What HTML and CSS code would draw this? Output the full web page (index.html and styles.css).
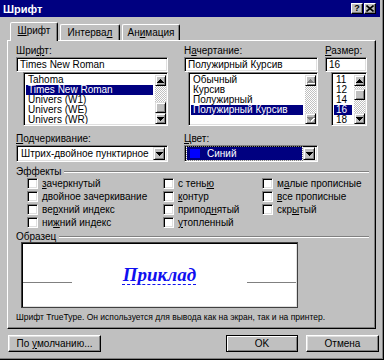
FILE: index.html
```html
<!DOCTYPE html>
<html lang="ru">
<head>
    <meta charset="utf-8">
    <title>Шрифт</title>
    <link rel="stylesheet" href="styles.css">
</head>
<body>
<div class="window">
    <div class="titlebar">
        <span class="title">Шрифт</span>
        <div class="title-buttons">
            <span class="tbtn help">?</span>
            <span class="tbtn"><svg width="8" height="7" viewBox="0 0 8 7"><path d="M0.5 0.5l7 6M7.5 0.5l-7 6" stroke="#000" stroke-width="1.6"/></svg></span>
        </div>
    </div>

    <div class="tabs">
        <div class="tab active"><u>Ш</u>рифт</div>
        <div class="tab">Интерва<u>л</u></div>
        <div class="tab">Ан<u>и</u>мация</div>
    </div>

    <section class="panel">
        <div class="cols">
            <div class="col col-font">
                <label>Шри<u>ф</u>т:</label>
                <div class="field">Times New Roman</div>
                <div class="list list-font">
                    <ul>
                        <li>Tahoma</li>
                        <li class="sel">Times New Roman</li>
                        <li>Univers (W1)</li>
                        <li>Univers (WE)</li>
                        <li>Univers (WR)</li>
                    </ul>
                    <div class="scroll">
                        <span class="sbtn"><svg width="7" height="4" viewBox="0 0 7 4"><path d="M3 0h1v1h1v1h1v1h1v1h-7v-1h1v-1h1v-1h1z"/></svg></span>
                        <span class="track"><i class="thumb thumb-low"></i></span>
                        <span class="sbtn"><svg width="7" height="4" viewBox="0 0 7 4"><path d="M0 0h7v1h-1v1h-1v1h-1v1h-1v-1h-1v-1h-1v-1h-1z"/></svg></span>
                    </div>
                </div>
            </div>

            <div class="col col-style">
                <label>Н<u>а</u>чертание:</label>
                <div class="field">Полужирный Курсив</div>
                <div class="list list-style">
                    <ul>
                        <li>Обычный</li>
                        <li>Курсив</li>
                        <li>Полужирный</li>
                        <li class="sel">Полужирный Курсив</li>
                    </ul>
                    <div class="scroll disabled">
                        <span class="sbtn"><svg width="7" height="4" viewBox="0 0 7 4"><path d="M3 0h1v1h1v1h1v1h1v1h-7v-1h1v-1h1v-1h1z"/></svg></span>
                        <span class="track"></span>
                        <span class="sbtn"><svg width="7" height="4" viewBox="0 0 7 4"><path d="M0 0h7v1h-1v1h-1v1h-1v1h-1v-1h-1v-1h-1v-1h-1z"/></svg></span>
                    </div>
                </div>
            </div>

            <div class="col col-size">
                <label><u>Р</u>азмер:</label>
                <div class="field">16</div>
                <div class="list list-size">
                    <ul>
                        <li>11</li>
                        <li>12</li>
                        <li>14</li>
                        <li class="sel">16</li>
                        <li>18</li>
                    </ul>
                    <div class="scroll">
                        <span class="sbtn"><svg width="7" height="4" viewBox="0 0 7 4"><path d="M3 0h1v1h1v1h1v1h1v1h-7v-1h1v-1h1v-1h1z"/></svg></span>
                        <span class="track"><i class="thumb thumb-top"></i></span>
                        <span class="sbtn"><svg width="7" height="4" viewBox="0 0 7 4"><path d="M0 0h7v1h-1v1h-1v1h-1v1h-1v-1h-1v-1h-1v-1h-1z"/></svg></span>
                    </div>
                </div>
            </div>
        </div>

        <div class="cols under-row">
            <div class="col col-font">
                <label><u>П</u>одчеркивание:</label>
                <div class="combo">
                    <span class="combo-value">Штрих-двойное пунктирное</span>
                    <span class="sbtn drop"><svg width="7" height="4" viewBox="0 0 7 4"><path d="M0 0h7v1h-1v1h-1v1h-1v1h-1v-1h-1v-1h-1v-1h-1z"/></svg></span>
                </div>
            </div>
            <div class="col col-color">
                <label><u>Ц</u>вет:</label>
                <div class="combo focused">
                    <span class="combo-value"><i class="swatch"></i>Синий</span>
                    <span class="sbtn drop"><svg width="7" height="4" viewBox="0 0 7 4"><path d="M0 0h7v1h-1v1h-1v1h-1v1h-1v-1h-1v-1h-1v-1h-1z"/></svg></span>
                </div>
            </div>
        </div>

        <div class="group-head"><span>Эффекты</span><i class="etch"></i></div>
        <div class="effects">
            <div class="check"><i class="box"></i><span><u>з</u>ачеркнутый</span></div>
            <div class="check"><i class="box"></i><span><u>д</u>войное зачеркивание</span></div>
            <div class="check"><i class="box"></i><span>ве<u>р</u>хний индекс</span></div>
            <div class="check"><i class="box"></i><span>ни<u>ж</u>ний индекс</span></div>
            <div class="check"><i class="box"></i><span>с тень<u>ю</u></span></div>
            <div class="check"><i class="box"></i><span><u>к</u>онтур</span></div>
            <div class="check"><i class="box"></i><span>припод<u>н</u>ятый</span></div>
            <div class="check"><i class="box"></i><span><u>у</u>топленный</span></div>
            <div class="check"><i class="box"></i><span>м<u>а</u>лые прописные</span></div>
            <div class="check"><i class="box"></i><span><u>в</u>се прописные</span></div>
            <div class="check"><i class="box"></i><span>скр<u>ы</u>тый</span></div>
        </div>

        <div class="group-head"><span>Образец</span><i class="etch"></i></div>
        <div class="preview">
            <i class="base-line"></i>
            <span class="sample">Приклад</span>
            <i class="base-line"></i>
        </div>
        <p class="note">Шрифт TrueType. Он используется для вывода как на экран, так и на принтер.</p>
    </section>

    <div class="buttons">
        <span class="btn btn-default-set"><span>По <u>у</u>молчанию...</span></span>
        <span class="btn btn-ok">OK</span>
        <span class="btn btn-cancel">Отмена</span>
    </div>
</div>
</body>
</html>
```

FILE: styles.css
```css
body {
    margin: 0;

    font-family: "Liberation Sans", Arial, sans-serif;
    font-size: 10px;
    color: #000;
}

.window {
    width: 384px;
    height: 360px;
    box-sizing: border-box;
    padding-right: 4px;

    background-color: #c0c0c0;
    box-shadow: inset -1px -1px #000, inset -2px -2px #808080;
    overflow: hidden;
}

/* title bar */

.titlebar {
    display: flex;
    align-items: center;
    height: 17px;
    padding: 0 4px 0 3px;

    background-color: #000080;
}

.title {
    flex: 1;

    font-size: 11px;
    font-weight: bold;
    color: #fff;
}

.title-buttons {
    display: flex;
    gap: 1px;
}

.tbtn {
    display: flex;
    align-items: center;
    justify-content: center;
    width: 12px;
    height: 11px;
    box-sizing: border-box;

    font-size: 9px;
    font-weight: bold;
    line-height: 9px;

    background-color: #c0c0c0;
    border: 1px solid;
    border-color: #fff #000 #000 #fff;
    box-shadow: inset -1px -1px #808080;
}

/* tabs */

.tabs {
    display: flex;
    align-items: flex-end;
    height: 18px;
    margin-top: 5px;
    padding-left: 10px;
    gap: 2px;
}

.tab {
    height: 16px;
    box-sizing: border-box;
    padding-top: 1px;

    line-height: 14px;
    text-align: center;

    border: 1px solid;
    border-bottom: 0;
    border-color: #fff #000 transparent #fff;
    border-radius: 2px 2px 0 0;
    box-shadow: inset -1px 0 #808080;
}

.tab:nth-child(1) { width: 48px; }
.tab:nth-child(2) { width: 60px; }
.tab:nth-child(3) { width: 58px; }

.tab.active {
    position: relative;
    z-index: 1;
    height: 19px;
    margin-bottom: -1px;
    padding-top: 1px;

    background-color: #c0c0c0;
}

/* panel */

.panel {
    width: 369px;
    height: 289px;
    box-sizing: border-box;
    margin-left: 7px;
    padding: 3px 0 0 8px;

    border: 1px solid;
    border-color: #fff #000 #000 #fff;
    box-shadow: inset -1px -1px #808080;
}

.cols {
    display: flex;
}

.col label {
    display: block;
    height: 13px;

    line-height: 13px;
}

.col-font { width: 152px; margin-right: 16px; }
.col-style { width: 134px; margin-right: 7px; }
.col-color { width: 134px; }
.col-size { width: 42px; }

.field,
.list,
.combo,
.box,
.preview {
    box-sizing: border-box;

    background-color: #fff;
    border: 1px solid;
    border-color: #808080 #fff #fff #808080;
    box-shadow: inset 1px 1px #000, inset -1px -1px #dfdfdf;
}

.field {
    height: 15px;
    padding: 1px 3px;

    line-height: 11px;
    white-space: nowrap;
}

.list {
    display: flex;
    height: 54px;
    padding: 2px 1px 1px 2px;
}

.list-font { margin-left: 7px; }
.list-style { margin-left: 4px; }
.list-size { margin-left: 6px; }

.list ul {
    flex: 1;
    margin: 0;
    padding: 0;

    list-style: none;
    overflow: hidden;
}

.list li {
    height: 10px;
    padding-left: 2px;

    line-height: 10px;
    white-space: nowrap;
}

.list li.sel {
    margin-right: 2px;

    color: #fff;
    background-color: #000080;
}

/* scrollbars */

.scroll {
    display: flex;
    flex-direction: column;
    width: 11px;
}

.sbtn {
    display: flex;
    align-items: center;
    justify-content: center;
    width: 11px;
    height: 11px;
    box-sizing: border-box;

    background-color: #c0c0c0;
    border: 1px solid;
    border-color: #dfdfdf #000 #000 #dfdfdf;
    box-shadow: inset 1px 1px #fff, inset -1px -1px #808080;
}

.sbtn svg {
    fill: #000;
}

.scroll.disabled svg {
    fill: #808080;
    filter: drop-shadow(1px 1px 0 #fff);
}

.track {
    display: block;
    flex: 1;

    background: repeating-conic-gradient(#c0c0c0 0 25%, #fff 0 50%) 0 0 / 2px 2px;
}

.thumb {
    display: block;
    height: 11px;
    box-sizing: border-box;

    background-color: #c0c0c0;
    border: 1px solid;
    border-color: #dfdfdf #000 #000 #dfdfdf;
    box-shadow: inset 1px 1px #fff, inset -1px -1px #808080;
}

.thumb-low { margin-top: 16px; }
.thumb-top { margin-top: 3px; }

/* combos */

.under-row {
    margin-top: 6px;
}

.combo {
    display: flex;
    align-items: center;
    height: 17px;
    padding: 2px;
}

.combo-value {
    display: flex;
    align-items: center;
    flex: 1;
    height: 13px;
    padding-left: 2px;

    white-space: nowrap;
    overflow: hidden;
}

.drop {
    width: 12px;
    height: 13px;
}

.combo.focused .combo-value {
    margin-right: 1px;
    padding-left: 3px;

    color: #fff;
    background-color: #000080;
    outline: 1px dotted #808080;
}

.swatch {
    width: 10px;
    height: 9px;
    margin-right: 7px;

    background-color: #0000ff;
}

/* groups */

.group-head {
    display: flex;
    align-items: center;
    height: 11px;
    margin: 4px 6px 0 0;
    gap: 3px;
}

.etch {
    flex: 1;
    height: 1px;

    background-color: #808080;
    border-bottom: 1px solid #fff;
}

.effects {
    display: grid;
    grid-template-columns: 136px 99px auto;
    grid-template-rows: repeat(4, 13px);
    grid-auto-flow: column;
    margin-left: 11px;
}

.check {
    display: flex;
    align-items: center;
    gap: 4px;

    white-space: nowrap;
}

.box {
    width: 11px;
    height: 11px;
}

.effects + .group-head {
    margin-top: 2px;
}

/* preview */

.preview {
    display: flex;
    align-items: center;
    justify-content: space-between;
    width: 277px;
    height: 66px;
    margin-left: 5px;
    padding: 0 1px 0 1px;

    border-color: #404040;
}

.base-line {
    width: 49px;
    height: 1px;
    margin-top: 14px;

    background-color: #808080;
}

.sample {
    font-family: "Liberation Serif", "Times New Roman", serif;
    font-size: 19px;
    font-weight: bold;
    font-style: italic;
    color: #1010f0;

    text-decoration: underline dashed #1010f0 1px;
    text-underline-offset: 3px;
}

.note {
    margin: 4px 0 0 0;

    font-size: 8.5px;
    line-height: 10px;
    white-space: nowrap;
}

/* buttons */

.buttons {
    display: flex;
    margin-top: 6px;
    padding: 0 1px 0 8px;
}

.btn {
    display: flex;
    align-items: center;
    justify-content: center;
    height: 17px;
    box-sizing: border-box;

    border: 1px solid;
    border-color: #fff #000 #000 #fff;
    box-shadow: inset -1px -1px #808080, inset 1px 1px #dfdfdf;
}

.btn-default-set { width: 93px; }

.btn-ok {
    width: 72px;
    margin-left: auto;
    margin-right: 8px;

    border-color: #000;
    box-shadow: inset 1px 1px #fff, inset -1px -1px #808080;
}

.btn-cancel { width: 73px; }
```
